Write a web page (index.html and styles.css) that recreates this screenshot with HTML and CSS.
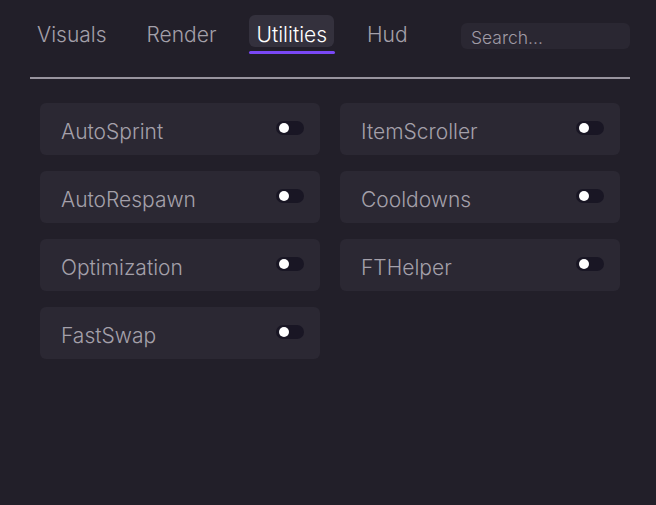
FILE: index.html
```html
<!DOCTYPE html>
<html>
<head>
<meta charset="utf-8">
<link rel="stylesheet" href="styles.css">
</head>
<body>
<div class="panel">
  <div class="header">
    <nav class="tabs">
      <span class="tab">Visuals</span>
      <span class="tab">Render</span>
      <span class="tab active">Utilities</span>
      <span class="tab">Hud</span>
    </nav>
    <div class="search">Search...</div>
  </div>
  <div class="divider"></div>
  <div class="grid">
    <div class="card"><span class="label">AutoSprint</span><span class="toggle"><span class="knob"></span></span></div>
    <div class="card"><span class="label">ItemScroller</span><span class="toggle"><span class="knob"></span></span></div>
    <div class="card"><span class="label">AutoRespawn</span><span class="toggle"><span class="knob"></span></span></div>
    <div class="card"><span class="label">Cooldowns</span><span class="toggle"><span class="knob"></span></span></div>
    <div class="card"><span class="label">Optimization</span><span class="toggle"><span class="knob"></span></span></div>
    <div class="card"><span class="label">FTHelper</span><span class="toggle"><span class="knob"></span></span></div>
    <div class="card"><span class="label">FastSwap</span><span class="toggle"><span class="knob"></span></span></div>
  </div>
</div>
</body>
</html>
```
FILE: styles.css
```css
html, body {
  margin: 0;
  padding: 0;
  width: 656px;
  height: 505px;
  background: #221f29;
  overflow: hidden;
}
.panel {
  font-family: Inter, "Noto Sans", sans-serif;
  font-weight: 300;
  padding: 15px 26px 0 30px;
  box-sizing: border-box;
  width: 656px;
  height: 505px;
}
.header {
  display: flex;
  align-items: flex-start;
  height: 40px;
}
.tabs {
  display: flex;
  gap: 26px;
}
.tab {
  font-size: 21px;
  color: #a4a0aa;
  height: 32px;
  line-height: 40px;
  padding: 0 7px;
  border-radius: 6px;
  position: relative;
}
.tab.active {
  color: #ffffff;
  background: #34313d;
}
.tab.active::after {
  content: "";
  position: absolute;
  left: 0;
  right: -1px;
  top: 36px;
  height: 3px;
  border-radius: 2px;
  background: #7a48f6;
}
.search {
  margin-left: auto;
  margin-top: 8px;
  width: 169px;
  height: 26px;
  box-sizing: border-box;
  padding-left: 10px;
  border-radius: 6px;
  background: #2a2732;
  color: #a09ba6;
  font-size: 17.5px;
  line-height: 29px;
}
.divider {
  height: 2px;
  background: #98949e;
  margin-top: 22px;
}
.grid {
  display: grid;
  grid-template-columns: 280px 280px;
  column-gap: 20px;
  row-gap: 16px;
  padding: 24px 0 0 10px;
}
.card {
  height: 52px;
  background: #2b2833;
  border-radius: 6px;
  display: flex;
  align-items: center;
  padding: 4px 16px 0 21px;
  box-sizing: border-box;
}
.label {
  font-size: 21px;
  color: #a4a0aa;
  flex: 1;
}
.toggle {
  width: 28px;
  height: 14px;
  border-radius: 7px;
  background: #191624;
  display: flex;
  align-items: center;
  padding-left: 3px;
  box-sizing: border-box;
  margin-top: -7px;
}
.knob {
  width: 10px;
  height: 10px;
  border-radius: 50%;
  background: #ffffff;
}
```
